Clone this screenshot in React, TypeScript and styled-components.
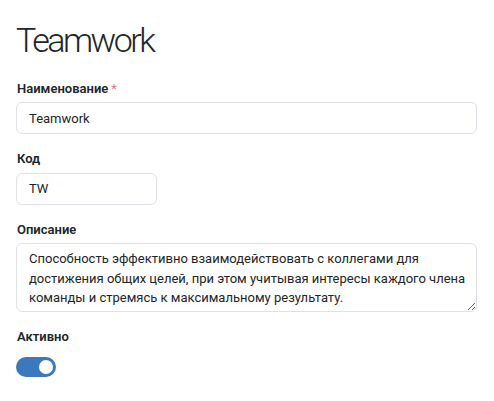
import React from "react";
import styled, { createGlobalStyle } from "styled-components";

const GlobalStyle = createGlobalStyle`
  html, body {
    margin: 0;
    background: #ffffff;
  }
  body {
    font-family: Roboto, "Noto Sans", "DejaVu Sans", sans-serif;
    font-size: 13px;
    color: #212529;
  }
`;

const Page = styled.main`
  padding: 20px 17px 16px 16px;
  width: 461px;
`;

const Title = styled.h1`
  font-size: 34px;
  font-weight: 300;
  line-height: 1.2;
  margin: 0 0 18px 0;
  letter-spacing: -2.5px;
  color: #212529;
`;

const Group = styled.div`
  margin-bottom: 15px;
`;

const Label = styled.label`
  display: block;
  font-weight: 600;
  font-size: 13px;
  line-height: 19.5px;
  margin-bottom: 4px;
  padding-left: 1px;
`;

const Req = styled.span`
  color: #e07782;
  margin-left: 3px;
  font-weight: 400;
`;

const Input = styled.input<{ $w?: number }>`
  box-sizing: border-box;
  display: block;
  width: ${(p) => (p.$w ? `${p.$w}px` : "100%")};
  height: 32px;
  padding: 0 12px;
  font: inherit;
  color: #212529;
  border: 1px solid #dee2e6;
  border-radius: 6px;
  background: #fff;
  outline: none;
`;

const TextArea = styled.textarea`
  box-sizing: border-box;
  display: block;
  width: 100%;
  height: 69px;
  padding: 5px 4px 3px 12px;
  font: inherit;
  line-height: 19.5px;
  color: #212529;
  border: 1px solid #dee2e6;
  border-radius: 6px;
  background: #fff;
  outline: none;
  overflow: hidden;
  resize: vertical;
`;

const Switch = styled.button<{ $on: boolean }>`
  position: relative;
  width: 40px;
  height: 20px;
  margin-top: 10px;
  border: none;
  border-radius: 10px;
  padding: 0;
  background: ${(p) => (p.$on ? "#3a79bd" : "#dee2e6")};
  cursor: pointer;
  display: block;

  &::after {
    content: "";
    position: absolute;
    top: 3px;
    left: ${(p) => (p.$on ? "23px" : "3px")};
    width: 14px;
    height: 14px;
    border-radius: 50%;
    background: #fff;
  }
`;

const App: React.FC = () => {
  const [active, setActive] = React.useState(true);
  return (
    <Page>
      <GlobalStyle />
      <Title>Teamwork</Title>
      <Group>
        <Label>
          Наименование<Req>*</Req>
        </Label>
        <Input type="text" defaultValue="Teamwork" />
      </Group>
      <Group>
        <Label>Код</Label>
        <Input type="text" defaultValue="TW" $w={141} />
      </Group>
      <Group>
        <Label>Описание</Label>
        <TextArea defaultValue="Способность эффективно взаимодействовать с коллегами для достижения общих целей, при этом учитывая интересы каждого члена команды и стремясь к максимальному результату." />
      </Group>
      <Group>
        <Label>Активно</Label>
        <Switch $on={active} onClick={() => setActive(!active)} />
      </Group>
    </Page>
  );
};

export default App;
